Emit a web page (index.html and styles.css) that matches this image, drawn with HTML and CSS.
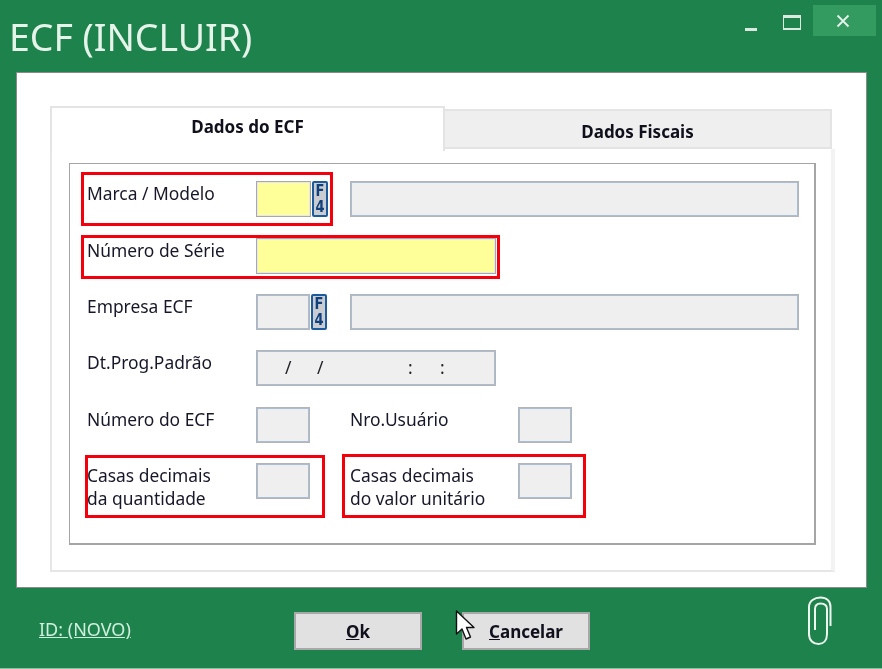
FILE: index.html
```html
<!DOCTYPE html>
<html lang="pt-BR">
<head>
<meta charset="utf-8">
<title>ECF (INCLUIR)</title>
<link rel="stylesheet" href="styles.css">
</head>
<body>
<div class="window">
  <header class="titlebar">
    <h1 class="title">ECF (INCLUIR)</h1>
    <div class="controls">
      <span class="ctl-min"></span>
      <span class="ctl-max"></span>
      <span class="ctl-close">
        <svg width="14" height="14" viewBox="0 0 14 14"><path d="M1.500 1.500l11 11M12.500 1.500l-11 11" stroke="#e8f2ec" stroke-width="1.800" fill="none"/></svg>
      </span>
    </div>
  </header>

  <main class="panel">
    <div class="tabs">
      <div class="tab tab-active">Dados do ECF</div>
      <div class="tab tab-idle">Dados Fiscais</div>
    </div>
    <div class="pane">
      <div class="group">
        <div class="row">
          <div class="label">Marca / Modelo</div>
          <div class="lookup lookup-req"><div class="input input-req"></div><div class="f4"><span class="f4-text">F<br>4</span></div></div>
          <div class="input input-long"></div>
        </div>
        <div class="row">
          <div class="label">Número de Série</div>
          <div class="input input-req input-mid"></div>
        </div>
        <div class="row">
          <div class="label">Empresa ECF</div>
          <div class="lookup"><div class="input"></div><div class="f4"><span class="f4-text">F<br>4</span></div></div>
          <div class="input input-long"></div>
        </div>
        <div class="row">
          <div class="label">Dt.Prog.Padrão</div>
          <div class="input input-mid mask"><span class="m1">/</span><span class="m2">/</span><span class="m3">:</span><span class="m4">:</span></div>
        </div>
        <div class="row">
          <div class="label">Número do ECF</div>
          <div class="input input-small"></div>
          <div class="label label-second">Nro.Usuário</div>
          <div class="input input-small"></div>
        </div>
        <div class="row">
          <div class="label">Casas decimais<br>da quantidade</div>
          <div class="input input-small"></div>
          <div class="label label-second">Casas decimais<br>do valor unitário</div>
          <div class="input input-small"></div>
        </div>
        <span class="mark mark-a"></span>
        <span class="mark mark-b"></span>
        <span class="mark mark-c"></span>
        <span class="mark mark-d"></span>
      </div>
    </div>
  </main>

  <footer class="footer">
    <a class="record-id" href="#">ID: (NOVO)</a>
    <button class="btn btn-ok" type="button"><u>O</u>k</button>
    <button class="btn btn-cancel" type="button"><u>C</u>ancelar</button>
    <svg class="clip" width="28" height="50" viewBox="0 0 28 50"><path d="M24.500 30V11C24.500 5 20.500 1.500 14.500 1.500S3 5 3 11V38C3 44.500 7.500 48 12.500 48S21 44.500 21 38V13C21 9.500 18.500 7.500 14.500 7.500S9 9.500 9 13V34" fill="none" stroke="#eef6f0" stroke-width="2"/></svg>
    <svg class="cursor" width="22" height="32" viewBox="0 0 22 32"><path d="M1.500 1V24L7 19L11 29L15.500 27L11.500 17.500H19Z" fill="#fff" stroke="#111" stroke-width="1.400" stroke-linejoin="round"/></svg>
  </footer>
</div>
</body>
</html>
```

FILE: styles.css
```css
* { box-sizing: border-box; }
html, body { margin: 0; padding: 0; }
body { width: 882px; height: 669px; overflow: hidden; background: #1e824c; font-family: "Noto Sans", "Open Sans", sans-serif; color: #16161e; }
.window { width: 882px; height: 669px; display: flex; flex-direction: column; background: #1e824c; border-bottom: 1px solid #8fbfa3; filter: blur(0.35px); }

.titlebar { height: 72px; flex: none; display: flex; justify-content: space-between; padding: 5px 6px 0 9px; }
.title { margin: 9px 0 0; font-weight: 400; font-size: 37.400px; line-height: 46px; color: #e6f3ea; }
.controls { display: flex; align-items: flex-start; }
.ctl-min { width: 12px; height: 3px; background: #dbe9e1; margin: 23px 26px 0 0; }
.ctl-max { width: 18px; height: 15px; border: 1px solid #dbe9e1; border-top-width: 3px; border-bottom-width: 2px; margin: 10px 12px 0 0; }
.ctl-close { width: 63px; height: 31px; background: #339a60; display: flex; align-items: center; justify-content: center; padding-right: 4px; }

.panel { flex: none; height: 516px; margin: 0 15px 0 16px; background: #fff; border: 1px solid #8a8a8a; padding: 33px 0 0 33px; }
.tabs { display: flex; align-items: flex-end; height: 43px; }
.tab { font-weight: 700; font-size: 17px; text-align: center; color: #10101c; }
.tab-active { width: 395px; height: 45px; background: #fff; border: 2px solid #e4e4e4; border-bottom: 0; line-height: 38px; position: relative; z-index: 1; margin-bottom: -2px; }
.tab-idle { width: 387px; height: 40px; background: #efefef; border: 2px solid #e4e4e4; border-left: 0; line-height: 41px; }
.pane { width: 785px; height: 423px; background: #fff; border: 2px solid #e6e6e6; border-top: 0; border-right: 4px solid #f3f3f3; padding: 14px 0 0 17px; }
.group { position: relative; width: 747px; height: 382px; border: 1px solid #a5a5a5; border-width: 1px 2px 2px 1px; padding: 17.400px 0 0 17px; display: flex; flex-direction: column; gap: 20.300px; }

.row { display: flex; height: 36px; flex: none; }
.label { width: 169px; flex: none; font-size: 17.400px; line-height: 23px; padding-top: 1px; color: #17172a; }
.label-second { width: 168px; margin-left: 40px; }

.input { height: 36px; background: #efefef; border: 2px solid #a9bdd6; outline: 1px solid #b5b5b5; outline-offset: -1px; }
.input-req { background: #ffff99; border-color: #e8e8e8; outline-color: #a8a8a8; }
.input-long { width: 449px; margin-left: 22px; }
.input-mid { width: 240px; }
.input-small { width: 54px; }

.lookup { display: flex; width: 72px; flex: none; }
.lookup .input { width: 54px; }
.lookup-req .input { width: 56px; }
.f4 { width: 16px; height: 36px; flex: none; margin-left: 1px; background: #c9cdd2; border: 2px solid #1c5b9c; border-radius: 2px; text-align: center; }
.f4-text { display: block; color: #12407c; font-family: "DejaVu Sans", sans-serif; font-weight: 700; font-size: 13px; line-height: 13px; transform: translateY(-1px) scaleY(1.250); transform-origin: top center; }

.mask { position: relative; font-size: 17.400px; line-height: 31px; color: #22222a; }
.mask span { position: absolute; top: 0; }
.m1 { left: 27px; }
.m2 { left: 59px; }
.m3 { left: 150px; }
.m4 { left: 182px; }

.mark { position: absolute; border: 3px solid #f4000c; }
.mark-a { left: 11px; top: 8px; width: 252px; height: 54px; }
.mark-b { left: 11px; top: 71px; width: 419px; height: 44px; }
.mark-c { left: 15px; top: 291px; width: 240px; height: 63px; }
.mark-d { left: 272px; top: 290px; width: 244px; height: 64px; }

.footer { flex: 1; position: relative; display: flex; align-items: flex-start; padding-top: 24px; }
.record-id { width: 255px; margin-left: 39px; padding-top: 5px; flex: none; color: #cfeedd; font-size: 18px; line-height: 24px; }
.btn { width: 128px; height: 38px; flex: none; background: #e1e1e1; border: 2px solid #a8a8a8; font-family: inherit; font-size: 17px; font-weight: 700; color: #10101c; padding: 0; }
.btn-cancel { margin-left: 40px; }
.clip { position: absolute; left: 806px; top: 8px; }
.cursor { position: absolute; left: 455px; top: 22px; }
```
